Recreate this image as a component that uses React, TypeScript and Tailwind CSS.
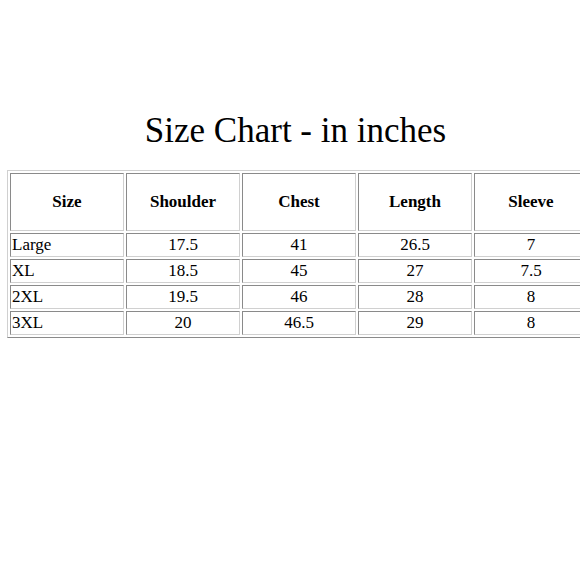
import React from "react";

const headers = ["Size", "Shoulder", "Chest", "Length", "Sleeve"];
const rows = [
  ["Large", "17.5", "41", "26.5", "7"],
  ["XL", "18.5", "45", "27", "7.5"],
  ["2XL", "19.5", "46", "28", "8"],
  ["3XL", "20", "46.5", "29", "8"],
];

export default function App() {
  return (
    <div className="w-[580px] h-[580px] overflow-hidden bg-white text-black font-['Liberation_Serif','Times_New_Roman',serif]">
      <h1 className="pt-[111px] pl-[11px] text-center text-[35px] leading-[40px] font-normal">
        Size Chart - in inches
      </h1>
      <table className="mt-[19px] ml-[7px] w-[584px] table-fixed border-separate border-spacing-[2px] border border-t-[#d0d0d0] border-l-[#d0d0d0] border-r-[#8a8a8a] border-b-[#8a8a8a]">
        <tbody>
          <tr>
            {headers.map((h) => (
              <th
                key={h}
                className="w-[114px] h-[58px] p-[1px] text-center align-middle text-[17px] font-bold border border-t-[#8a8a8a] border-l-[#8a8a8a] border-r-[#d0d0d0] border-b-[#d0d0d0]"
              >
                {h}
              </th>
            ))}
          </tr>
          {rows.map((r) => (
            <tr key={r[0]}>
              {r.map((c, i) => (
                <td
                  key={i}
                  className={`h-[24px] p-[1px] align-middle text-[17px] leading-[20px] border border-t-[#8a8a8a] border-l-[#8a8a8a] border-r-[#d0d0d0] border-b-[#d0d0d0] ${
                    i === 0 ? "text-left" : "text-center"
                  }`}
                >
                  {c}
                </td>
              ))}
            </tr>
          ))}
        </tbody>
      </table>
    </div>
  );
}
